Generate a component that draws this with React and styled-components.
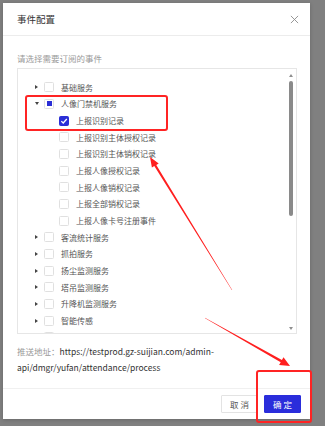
import React from 'react'
import styled, { createGlobalStyle } from 'styled-components'

const Global = createGlobalStyle`
  html, body { margin: 0; padding: 0; }
  body {
    width: 325px;
    height: 426px;
    overflow: hidden;
    background: #808080;
    font-family: "Noto Sans CJK SC", "Noto Sans", sans-serif;
  }
`

const tree = [
  { label: '基础服务', caret: 'right', state: 'off' },
  { label: '人像门禁机服务', caret: 'down', state: 'half' },
  { label: '上报识别记录', child: true, state: 'on' },
  { label: '上报识别主体授权记录', child: true, state: 'off' },
  { label: '上报识别主体销权记录', child: true, state: 'off' },
  { label: '上报人像授权记录', child: true, state: 'off' },
  { label: '上报人像销权记录', child: true, state: 'off' },
  { label: '上报全部销权记录', child: true, state: 'off' },
  { label: '上报人像卡号注册事件', child: true, state: 'off' },
  { label: '客流统计服务', caret: 'right', state: 'off' },
  { label: '抓拍服务', caret: 'right', state: 'off' },
  { label: '扬尘监测服务', caret: 'right', state: 'off' },
  { label: '塔吊监测服务', caret: 'right', state: 'off' },
  { label: '升降机监测服务', caret: 'right', state: 'off' },
  { label: '智能传感', caret: 'right', state: 'off' },
  { label: '监控服务', caret: 'right', state: 'off' },
]

export default function App() {
  return (
    <Page>
      <Global />
      <Modal>
        <Header>
          <Title>事件配置</Title>
          <Close viewBox="0 0 10 10">
            <path d="M1 1 L9 9 M9 1 L1 9" stroke="#8c8c8c" strokeWidth="1" fill="none" />
          </Close>
        </Header>
        <Body>
          <Hint>请选择需要订阅的事件</Hint>
          <TreeBox>
            <TreeList>
              {tree.map((n) => (
                <Row key={n.label} child={n.child}>
                  <Caret>
                    {n.caret === 'right' && <CaretRight />}
                    {n.caret === 'down' && <CaretDown />}
                  </Caret>
                  <Check state={n.state}>
                    {n.state === 'on' && (
                      <svg width="8" height="8" viewBox="0 0 8 8">
                        <path d="M1.3 4.1 L3.2 6 L6.8 2" stroke="#fff" strokeWidth="1.3" fill="none" />
                      </svg>
                    )}
                    {n.state === 'half' && <HalfMark />}
                  </Check>
                  <Label>{n.label}</Label>
                </Row>
              ))}
            </TreeList>
            <ScrollBar>
              <ArrowUp />
              <Track>
                <Thumb />
              </Track>
              <ArrowDown />
            </ScrollBar>
          </TreeBox>
          <Push>
            <PushLabel>推送地址：</PushLabel>https://testprod.gz-suijian.com/admin-
            <br />
            api/dmgr/yufan/attendance/process
          </Push>
        </Body>
        <Footer>
          <Button>取消</Button>
          <Button primary>确定</Button>
        </Footer>
      </Modal>

      <Mark style={{ left: 25, top: 95, width: 143, height: 36 }} />
      <Mark style={{ left: 256, top: 370, width: 56, height: 53 }} />
      <Arrows width="325" height="426" viewBox="0 0 325 426">
        <polygon points="150,157 158.7,163.4 156.3,164.9 232.2,289.9 231.8,290.1 154.3,166.1 151.9,167.6" fill="#ff1f1f" />
        <polygon points="290,366 279.1,365 280.7,362.2 205.1,318.2 204.9,317.8 281.9,360 283.5,357.2" fill="#ff1f1f" />
      </Arrows>
    </Page>
  )
}

const Page = styled.div`
  position: relative;
  width: 325px;
  height: 426px;
  padding: 3px 15px 7px 3px;
  box-sizing: border-box;
`

const Modal = styled.div`
  width: 307px;
  height: 416px;
  background: #fff;
  display: flex;
  flex-direction: column;
  box-shadow: 0 1px 4px rgba(0, 0, 0, 0.2);
`

const Header = styled.div`
  height: 32px;
  flex: none;
  border-bottom: 1px solid #ececec;
  display: flex;
  align-items: center;
  justify-content: space-between;
  padding: 0 11px 0 14px;
`

const Title = styled.div`
  font-size: 9.5px;
  color: #333;
`

const Close = styled.svg`
  width: 9px;
  height: 9px;
`

const Body = styled.div`
  flex: 1;
  padding: 16px 13px 0 14px;
  display: flex;
  flex-direction: column;
`

const Hint = styled.div`
  font-size: 8.5px;
  line-height: 12px;
  color: #9a9a9a;
`

const TreeBox = styled.div`
  margin-top: 4px;
  height: 266px;
  box-sizing: border-box;
  border: 1px solid #e6e6e6;
  display: flex;
  overflow: hidden;
`

const TreeList = styled.div`
  flex: 1;
  padding-top: 10px;
  overflow: hidden;
`

const Row = styled.div`
  height: 16.67px;
  display: flex;
  align-items: center;
  padding-left: ${(p) => (p.child ? 28 : 13)}px;
`

const Caret = styled.span`
  width: 11px;
  margin-right: 2px;
  display: flex;
  justify-content: center;
  align-items: center;
`

const CaretRight = styled.span`
  width: 0;
  height: 0;
  border-top: 2.5px solid transparent;
  border-bottom: 2.5px solid transparent;
  border-left: 3px solid #444;
`

const CaretDown = styled.span`
  width: 0;
  height: 0;
  border-left: 2.5px solid transparent;
  border-right: 2.5px solid transparent;
  border-top: 3px solid #444;
`

const Check = styled.span`
  width: 10px;
  height: 10px;
  box-sizing: border-box;
  border-radius: 1.5px;
  margin-right: 7px;
  display: flex;
  align-items: center;
  justify-content: center;
  border: 1px solid ${(p) => (p.state === 'on' ? '#2b2fd6' : '#e0e0e0')};
  background: ${(p) => (p.state === 'on' ? '#2b2fd6' : '#fff')};
`

const HalfMark = styled.span`
  width: 5px;
  height: 5px;
  background: #2b2fd6;
`

const Label = styled.span`
  font-size: 8px;
  color: #555;
  white-space: nowrap;
`

const ScrollBar = styled.div`
  width: 9px;
  flex: none;
  display: flex;
  flex-direction: column;
  align-items: center;
  padding: 5px 1px 3px 0;
`

const ArrowUp = styled.span`
  width: 0;
  height: 0;
  border-left: 2.5px solid transparent;
  border-right: 2.5px solid transparent;
  border-bottom: 3px solid #8f8f8f;
`

const ArrowDown = styled.span`
  width: 0;
  height: 0;
  border-left: 2.5px solid transparent;
  border-right: 2.5px solid transparent;
  border-top: 3px solid #8f8f8f;
`

const Track = styled.div`
  flex: 1;
  width: 4px;
  margin: 4px 0;
`

const Thumb = styled.div`
  width: 4px;
  height: 135px;
  border-radius: 2px;
  background: #8a8a8a;
`

const Push = styled.div`
  margin-top: 9px;
  font-size: 8.5px;
  line-height: 16px;
  color: #333;
`

const PushLabel = styled.span`
  color: #999;
`

const Footer = styled.div`
  flex: none;
  height: 30px;
  border-top: 1px solid #f0f0f0;
  display: flex;
  align-items: center;
  justify-content: flex-end;
  gap: 6px;
  padding-right: 9px;
`

const Button = styled.div`
  width: 37px;
  height: 18px;
  box-sizing: border-box;
  display: flex;
  align-items: center;
  justify-content: center;
  font-size: 8.5px;
  letter-spacing: 2px;
  text-indent: 2px;
  border-radius: 1px;
  border: 1px solid ${(p) => (p.primary ? '#2a2ddb' : '#e3e3e3')};
  background: ${(p) => (p.primary ? '#2a2ddb' : '#fff')};
  color: ${(p) => (p.primary ? '#fff' : '#555')};
`

const Mark = styled.div`
  position: absolute;
  box-sizing: border-box;
  border: 2px solid #ff2424;
  border-radius: 3px;
`

const Arrows = styled.svg`
  position: absolute;
  left: 0;
  top: 0;
  pointer-events: none;
`
